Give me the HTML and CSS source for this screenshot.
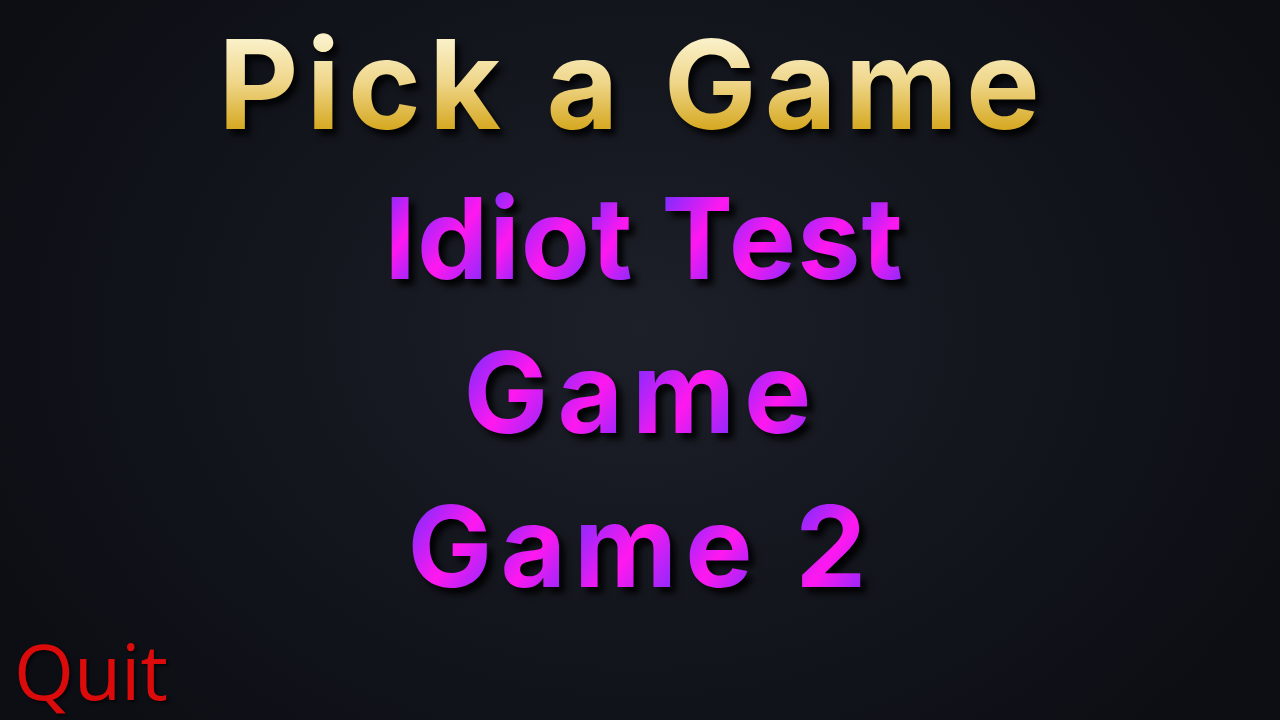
FILE: index.html
```html
<!DOCTYPE html>
<html lang="en">
<head>
<meta charset="utf-8">
<title>Pick a Game</title>
<link rel="stylesheet" href="styles.css">
</head>
<body>
<main class="screen">
  <h1 class="title">Pick a Game</h1>
  <nav class="menu">
    <div class="item item-idiot"><span class="g">I</span><span class="g">d</span><span class="g">i</span><span class="g">o</span><span class="g">t</span> <span class="g">T</span><span class="g">e</span><span class="g">s</span><span class="g">t</span></div>
    <div class="item item-game"><span class="g">G</span><span class="g">a</span><span class="g">m</span><span class="g">e</span></div>
    <div class="item item-game2"><span class="g">G</span><span class="g">a</span><span class="g">m</span><span class="g">e</span> <span class="g">2</span></div>
  </nav>
  <div class="quit">Quit</div>
</main>
</body>
</html>
```
FILE: styles.css
```css
html, body {
  margin: 0;
  padding: 0;
  width: 1280px;
  height: 720px;
  overflow: hidden;
}
body {
  background: radial-gradient(ellipse 720px 560px at 640px 330px, #1d2029 0%, #15171f 45%, #0c0e14 100%);
}
.screen {
  display: flex;
  flex-direction: column;
  align-items: center;
  padding-top: 14px;
  height: 720px;
  box-sizing: border-box;
}
.title {
  margin: 0 0 7px 0;
  padding-right: 14px;
  font-family: "Inter", sans-serif;
  font-weight: 700;
  font-size: 124px;
  line-height: 140px;
  letter-spacing: 8px;
  background: linear-gradient(180deg, #faf0c8 0px, #faf0c8 26px, #efd68a 68px, #d6a922 115px, #d6a922 140px);
  -webkit-background-clip: text;
  background-clip: text;
  color: transparent;
  filter: drop-shadow(5px 6px 3px rgba(0,0,0,0.85));
}
.menu {
  display: flex;
  flex-direction: column;
  align-items: center;
}
.item {
  font-family: "Inter", sans-serif;
  font-weight: 700;
  font-size: 113px;
  line-height: 154px;
  color: #c020f4;
  filter: drop-shadow(6px 6px 3px rgba(0,0,0,0.9));
}
.item-idiot {
  letter-spacing: 1px;
  padding-left: 8px;
}
.item-game {
  letter-spacing: 9px;
  padding-left: 4px;
}
.item-game2 {
  letter-spacing: 8px;
  padding-left: 2px;
}
.g {
  background: linear-gradient(125deg, #7a2cff 12%, #ff18ef 52%, #7a2cff 92%);
  -webkit-background-clip: text;
  background-clip: text;
  color: transparent;
}
.quit {
  align-self: flex-start;
  margin: 8px 0 0 14px;
  font-family: "Open Sans", sans-serif;
  font-size: 77px;
  line-height: 80px;
  color: #dc0b0b;
  text-shadow: 2px 2px 3px rgba(0,0,0,0.7);
}
```
